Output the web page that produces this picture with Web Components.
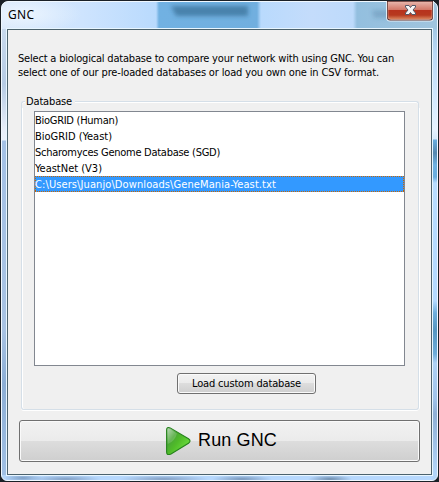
<!DOCTYPE html>
<html lang="en">
<head>
<meta charset="utf-8">
<title>GNC</title>
<style>
html,body{margin:0;height:100%;overflow:hidden;background:#171b20}
body{font:11px/14px "DejaVu Sans Condensed","DejaVu Sans",sans-serif;color:#000}
</style>
</head>
<body>
<gnc-window>
  <gnc-titlebar slot="title"><fit-text width="25" size="12">GNC</fit-text></gnc-titlebar>
  <gnc-intro>
    <fit-text width="376">Select a biological database to compare your network with using GNC. You can</fit-text>
    <fit-text width="361">select one of our pre-loaded databases or load you own one in CSV format.</fit-text>
  </gnc-intro>
  <gnc-group>
    <fit-text slot="legend" width="46">Database</fit-text>
    <gnc-list>
      <gnc-row><fit-text width="83">BioGRID (Human)</fit-text></gnc-row>
      <gnc-row><fit-text width="77">BioGRID (Yeast)</fit-text></gnc-row>
      <gnc-row><fit-text width="185">Scharomyces Genome Database (SGD)</fit-text></gnc-row>
      <gnc-row><fit-text width="67">YeastNet (V3)</fit-text></gnc-row>
      <gnc-row selected><fit-text width="241">C:\Users\Juanjo\Downloads\GeneMania-Yeast.txt</fit-text></gnc-row>
    </gnc-list>
    <gnc-button class="load"><fit-text width="109">Load custom database</fit-text></gnc-button>
  </gnc-group>
  <gnc-button class="run" large><play-icon></play-icon><fit-text width="79" size="18" face="Liberation Sans">Run GNC</fit-text></gnc-button>
</gnc-window>
<script>
function define(name, html, setup) {
  customElements.define(name, class extends HTMLElement {
    connectedCallback() {
      if (this.shadowRoot) return;
      this.attachShadow({mode: 'open'}).innerHTML = html;
      if (setup) setup(this);
    }
  });
}

/* A single line of text, tracked so that it spans the given width. */
define('fit-text', `<style>:host{display:block;white-space:pre}span{display:inline-block}</style><span></span>`, el => {
  const span = el.shadowRoot.querySelector('span');
  span.textContent = el.textContent;
  if (el.getAttribute('size')) span.style.fontSize = el.getAttribute('size') + 'px';
  if (el.getAttribute('face')) span.style.fontFamily = '"' + el.getAttribute('face') + '",sans-serif';
  const w = +el.getAttribute('width');
  el.style.width = w + 'px';
  const natural = span.getBoundingClientRect().width;
  span.style.letterSpacing = ((w - natural) / span.textContent.length) + 'px';
});

define('gnc-window', `<style>
:host{display:block;box-sizing:border-box;width:439px;height:482px;padding:1px;background:#1a2027}
.glass{box-sizing:border-box;width:437px;height:480px;border:1px solid #f0f8ff;border-radius:7px 7px 6px 6px;padding:0 4px 5px;
 background:
 radial-gradient(ellipse 60px 20px at 20px 12px,#edf6fff0,#e4f1ff00) no-repeat,
 linear-gradient(90deg,#d7e7fb 0,#cee4fe 80px,#b9dafd 154px,#71b1e2 157px,#71afdf 255px,#b9dafd 259px,#c4dcfb 310px,#bddafb 351px,#93bfdf 355px,#a0c4de 430px) no-repeat;
 background-size:100px 27px,100% 27px;background-color:#b3d5f9;position:relative;display:flex;flex-direction:column}
.edge{position:absolute;width:4px;top:27px;bottom:5px}
.l{left:0;background:linear-gradient(#c8d9ed 0,#b6cbe4 55px,#e6edf8 100px,#e9f1fb 111px,#a4c1e5 112px,#a8c3e3 300px,#8caed5 355px,#a0c0e4 100%)}
.r{right:0;background:linear-gradient(#a3c8e5 0,#bad9f6 25px,#d6ebff 75px,#e7f3ff 100px,#d5e9fb 110px,#6aadde 111px,#5587ae 124px,#6eb1e2 136px,#6aadde 148px,#b8dcff 154px,#b4d9ff 272px,#6daddc 284px,#5596c1 301px,#6eacd9 325px,#aed1f5 334px,#a0c3ea 370px,#8eafd5 385px,#b4d6fa 100%)}
.bottom{position:absolute;left:4px;right:4px;bottom:0;height:4px;background:radial-gradient(ellipse 20px 4px at 17px 2px,#7e9fc5,transparent),radial-gradient(ellipse 35px 4px at 60px 3px,#819fc4,transparent),radial-gradient(ellipse 45px 4px at 158px 3px,#839fc3,transparent),radial-gradient(ellipse 30px 4px at 236px 3px,#7897bb,transparent),radial-gradient(ellipse 22px 4px at 324px 3px,#6f8eae,transparent),#b7d8fd}
.client{position:relative;z-index:1;box-sizing:border-box;width:427px;height:448px;flex:none;border:1px solid #e8f6ff;background:#f0f0f0;display:flex;flex-direction:column}
.inner{box-sizing:border-box;width:425px;height:446px;border:1px solid #4c626d;display:flex;flex-direction:column;padding:22px 0 0 12px}
</style><div class="glass"><div class="edge l"></div><div class="edge r"></div><div class="bottom"></div><slot name="title"></slot><div class="client"><div class="inner"><slot></slot></div></div></div>`);

define('gnc-titlebar', `<style>
:host{display:flex;box-sizing:border-box;height:26px;flex:none;padding:5px 0 0 2px;justify-content:space-between;font-family:"Noto Sans",sans-serif;line-height:15px}
.shade{position:absolute;left:160px;top:0;display:block}
.close{box-sizing:border-box;width:48px;height:20px;margin:-6px -1px 0 0;position:relative}
svg{display:block}
</style>
<svg class="shade" width="240" height="22" viewBox="0 0 240 22"><defs><filter id="f" filterUnits="userSpaceOnUse" x="0" y="0" width="240" height="22"><feGaussianBlur stdDeviation="2"/></filter></defs><g filter="url(#f)" fill="#2f6288"><path d="M9 4H86V14H14Z" opacity=".6"/><path d="M210 8H240V16H212Z" opacity=".25"/></g></svg>
<slot></slot>
<div class="close"><svg width="48" height="21" viewBox="0 0 48 21">
<defs><linearGradient id="g" x1="0" y1="0" x2="0" y2="1"><stop stop-color="#e6b2a9"/><stop offset=".44" stop-color="#d27868"/><stop offset=".48" stop-color="#b7321d"/><stop offset=".75" stop-color="#b7391f"/><stop offset="1" stop-color="#dc8a62"/></linearGradient></defs>
<path d="M0 0H48V16Q48 20.5 44 20.5H4Q0 20.5 0 16Z" fill="#eef6fc" opacity=".85"/>
<path d="M1 0H47V16Q47 19.5 44 19.5H4Q1 19.5 1 16Z" fill="#592c2d"/>
<path d="M2 1H46V16Q46 18.5 43 18.5H5Q2 18.5 2 16Z" fill="url(#g)" stroke="#ebb8a9" stroke-opacity=".5"/>
<path d="M19.5 4.5H23L24.5 6.5L26 4.5H29.5V6L27 9L29.5 12V13.5H26L24.5 11.5L23 13.5H19.5V12L22 9L19.5 6Z" fill="#f8f8f8" stroke="#535767" stroke-width="1"/>
</svg></div>`);

define('gnc-intro', `<style>:host{display:flex;flex-direction:column;height:42px;flex:none;margin-left:-2px}</style><slot></slot>`);

define('gnc-group', `<style>
:host{display:flex;flex-direction:column;box-sizing:border-box;width:398px;height:316px;flex:none;margin-left:1px}
.legend{display:flex;height:14px;flex:none}
.legend:before,.legend:after{content:"";display:block;box-sizing:border-box;height:7px;align-self:flex-end;border-top:1px solid #d5dfe8;box-shadow:inset 0 1px #fff}
.legend:before{width:4px;border-left:1px solid #d5dfe8;border-top-left-radius:3px}
.legend:after{flex:1;border-right:1px solid #d5dfe8;border-top-right-radius:3px}
.name{padding:1px 3px 0 1px}
.box{flex:1;box-sizing:border-box;border:1px solid #d5dfe8;border-top:0;border-radius:0 0 3px 3px;box-shadow:inset 1px 0 #fff,1px 0 #fff,0 1px #fff;padding:3px 12px 0;display:flex;flex-direction:column;align-items:flex-start}
::slotted(.load){margin:7px 0 0 143px;width:139px;height:21px}
</style><div class="legend"><div class="name"><slot name="legend"></slot></div></div><div class="box"><slot></slot></div></div>`);

define('gnc-list', `<style>:host{display:block;box-sizing:border-box;width:371px;height:255px;flex:none;border:1px solid #828790;background:#fff}</style><slot></slot>`);

define('gnc-row', `<style>
:host{display:block;box-sizing:border-box;height:16px;padding:2px 0 0 0}
:host([selected]){color:#fff;background:
 repeating-linear-gradient(90deg,#cc6600 0 1px,#3399ff 1px 2px) 0 0/100% 1px no-repeat,
 repeating-linear-gradient(90deg,#cc6600 0 1px,#3399ff 1px 2px) 0 100%/100% 1px no-repeat,
 repeating-linear-gradient(#cc6600 0 1px,#3399ff 1px 2px) 0 0/1px 100% no-repeat,
 repeating-linear-gradient(#cc6600 0 1px,#3399ff 1px 2px) 100% 0/1px 100% no-repeat,#3399ff}
</style><slot></slot>`);

define('gnc-button', `<style>
:host{display:flex;box-sizing:border-box;flex:none;align-items:center;justify-content:center;border:1px solid #707070;border-radius:3px;box-shadow:inset 0 0 0 1px #fafafa;background:linear-gradient(#f2f2f2,#ebebeb 49%,#dddddd 50%,#cfcfcf)}
:host([large]){width:401px;height:42px;margin-top:10px;margin-left:-1px;padding-left:4px;gap:7px;line-height:24px}
</style><slot></slot>`);

define('play-icon', `<style>:host{display:block;width:25px;height:28px}svg{display:block}</style>
<svg width="25" height="28" viewBox="0 0 25 28"><defs>
<linearGradient id="a" x1="0" y1=".1" x2=".8" y2=".8"><stop stop-color="#a5cda0"/><stop offset=".35" stop-color="#49a735"/><stop offset=".6" stop-color="#50bb29"/><stop offset="1" stop-color="#6bdc3e"/></linearGradient></defs>
<path d="M.6 3Q.6-.4 4.2.9L22.5 11.8Q25.6 14 22.5 16.2L5 27Q.6 29 .6 25Z" fill="url(#a)" stroke="#26831c" stroke-width="1.1"/>
<path d="M1.8 3Q2 1.4 4 2.2L11 6.4Q9 14 1.8 17Z" fill="#fff" opacity=".17"/></svg>`);
</script>
</body>
</html>
